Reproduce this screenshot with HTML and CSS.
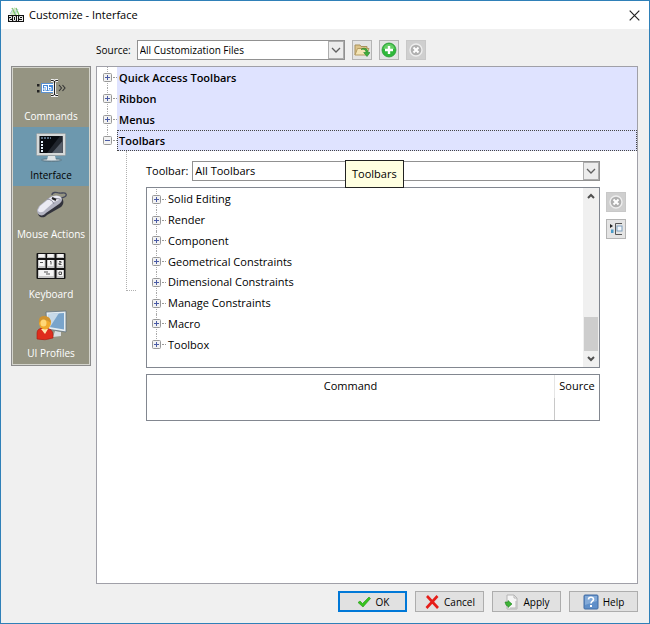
FILE: index.html
```html
<!DOCTYPE html>
<html lang="en">
<head>
<meta charset="utf-8">
<title>Customize - Interface</title>
<link rel="stylesheet" href="styles.css">
</head>
<body>
<svg class="defs" aria-hidden="true">
  <symbol id="plus" viewBox="0 0 9 9"><rect x=".5" y=".5" width="8" height="8" rx="1" fill="#f2f2f2" stroke="#999"/><path d="M2 4.500h5M4.500 2v5" stroke="#4a5ba5"/></symbol>
  <symbol id="minus" viewBox="0 0 9 9"><rect x=".5" y=".5" width="8" height="8" rx="1" fill="#f2f2f2" stroke="#999"/><path d="M2 4.500h5" stroke="#4a5ba5"/></symbol>
  <symbol id="chevron" viewBox="0 0 10 10"><path d="M1 3l4 4 4-4" fill="none" stroke="#606060" stroke-width="1.300"/></symbol>
  <symbol id="remove" viewBox="0 0 16 16"><circle cx="8" cy="8" r="6" fill="#b0b0b0" stroke="#eee" stroke-width="1.400"/><path d="M5.500 5.500l5 5M10.500 5.500l-5 5" stroke="#fff" stroke-width="2"/></symbol>
</svg>
<div class="window">
  <header class="titlebar">
    <svg class="logo" width="16" height="16" viewBox="0 0 16 16"><path d="M2.500 8L4 3l3-3 2 8z" fill="#cfe6c4"/><path d="M4 1l3.500 7M8 1l3 7" stroke="#7cc46a" stroke-width="1.300"/><path d="M2 7l3-5M7 7l3-5" stroke="#a8c9d2"/><rect y="8" width="16" height="7" fill="#111"/><path d="M1 9.500h2.500v2h-2v2h2.500M5.500 9.500h2v4h-2zM9.500 9v5M14.500 13.500v-4h-3v2h3M11 13.500h4" fill="none" stroke="#eee"/></svg>
    <h1>Customize - Interface</h1>
    <button class="close" aria-label="Close"><svg width="11" height="11" viewBox="0 0 11 11"><path d="M.7.7l9.600 9.600M10.300.7L.7 10.300" stroke="#222" stroke-width="1.200"/></svg></button>
  </header>
  <div class="source-row">
    <label for="source">Source:</label>
    <div class="combo source-combo">
      <select id="source"><option>All Customization Files</option></select>
      <span class="arrow"><svg width="10" height="10"><use href="#chevron"/></svg></span>
    </div>
    <button class="tool" aria-label="Load file"><svg width="16" height="16" viewBox="0 0 16 16"><path d="M1 13V3h5l1 1.500h6V7" fill="#dcc38a" stroke="#a9925c"/><path d="M1 13L3.500 6.500H15L12.500 13z" fill="#f4e5b5" stroke="#b59c62"/><path d="M7 7.500c3-1 5 .5 5 3h-2.300l3.300 4 3-4h-2c0-4-4-5.500-7-3z" fill="#3fae3b" stroke="#248526" stroke-width=".6"/></svg></button>
    <button class="tool" aria-label="Add"><svg width="16" height="16" viewBox="0 0 16 16"><circle cx="8" cy="8" r="7" fill="#2fb83a" stroke="#2a9a35" stroke-width=".8"/><path d="M2.500 7a5.500 5 0 0 1 11 0z" fill="#65cf65"/><path d="M8 4v8M4 8h8" stroke="#fff" stroke-width="2.400"/></svg></button>
    <button class="tool disabled" aria-label="Unload" disabled><svg width="16" height="16"><use href="#remove"/></svg></button>
  </div>
  <div class="content">
    <nav class="sidebar" aria-label="Sections">
      <button class="section">
        <svg width="32" height="32" viewBox="0 0 32 32"><path d="M2 12h2.500v2.500H2zM2 18h2.500v2.500H2z" fill="#222"/><rect x="6.500" y="11.500" width="13" height="9" fill="#fff" stroke="#5b91d0"/><rect x="8" y="13" width="10" height="6" fill="#4488d8"/><path d="M9 14.500h2.500V18H9v-2h2M13.500 13v5H16v-2.500h-2.500" fill="none" stroke="#fff"/><path d="M16 8.500h2l1.500 1 1.500-1h2M19.500 9v14M16 23.500h2l1.500-1 1.500 1h2" fill="none" stroke="#eee" stroke-width="3"/><path d="M16 8.500h2l1.500 1 1.500-1h2M19.500 9v14M16 23.500h2l1.500-1 1.500 1h2" fill="none" stroke="#222"/><path d="M24 13l2.500 3-2.500 3M27.500 13l2.500 3-2.500 3" fill="none" stroke="#333" stroke-width="1.100"/></svg>
        <span>Commands</span>
      </button>
      <button class="section current" aria-current="page">
        <svg width="32" height="32" viewBox="0 0 32 32"><ellipse cx="16.500" cy="29" rx="10" ry="1.500" fill="#a9b9c2" stroke="#47626f" stroke-width=".6"/><path d="M13 25h7l1 4h-9z" fill="#dfe4e6"/><rect x="1.500" y="2.500" width="29" height="22" rx="1" fill="#d5d9d9" stroke="#98a3a8"/><rect x="4.500" y="5" width="23" height="17" fill="#080b10"/><path d="M12 22L25 5h2.500v17z" fill="#20252d"/><path d="M17 22L27.500 10v12z" fill="#555d68"/><path d="M6 7h10" stroke="#a8cdef" stroke-dasharray="2 1"/><path d="M7 10v11" stroke="#e5f1fb" stroke-width="2" stroke-dasharray="2 1"/></svg>
        <span>Interface</span>
      </button>
      <button class="section">
        <svg width="32" height="32" viewBox="0 0 32 32"><path d="M17 5c0-3 4-3 7-2 3 .5 6-1 7 1s-2 4-6 4" fill="none" stroke="#44485a" stroke-width="1.300"/><path d="M3 21c-1 7 6 8 9 4L26 17c3-3 3-6 1-9L17 18z" fill="#32333c"/><path d="M2 20c0 6 6 7 9 3L24 14c3-2 4-5 2-7s-7-2-11 0L4 16z" fill="#b3b4c2"/><path d="M3 20c0 3 5 3 7 0l9-8c2-1 6-2 7-4-2-3-7-3-11 0L5 16z" fill="#ebebf3"/><path d="M12 9c3 0 6 2 7 5M17 8l8 1" fill="none" stroke="#8b8d9d"/><path d="M17 8l4 2" stroke="#222" stroke-width="2"/></svg>
        <span>Mouse Actions</span>
      </button>
      <button class="section">
        <svg width="32" height="32" viewBox="0 0 32 32"><rect x="1.500" y="3" width="29" height="26" rx="1" fill="#151515"/><path d="M3 4h7.500v4H3zM12 4h7.500v4H12zM21.500 4H29v4h-7.500zM3 10h7.500v8H3zM12 10h7.500v8H12zM21.500 10H29v8h-7.500zM3 20h16.500v8H3zM21.500 20H29v8h-7.500z" fill="#c6c6c6"/><path d="M4 4h5.500v3H4zM13 4h5.500v3H13zM22.500 4H28v3h-5.500zM4 10h5.500v6H4zM13 10h5.500v6H13zM22.500 10H28v6h-5.500zM4 20h14.500v6H4zM22.500 20H28v6h-5.500z" fill="#f5f5f5"/><path d="M5 12.500h3M15 11.500h1v3M24 11.500h2v1.500h-2v1.500h2.500M9 22h4M11 24h4M24 22h2.500v2.500H24z" fill="none" stroke="#555"/></svg>
        <span>Keyboard</span>
      </button>
      <button class="section">
        <svg width="32" height="32" viewBox="0 0 32 32"><path d="M20 22l6 1v4l-8 1z" fill="#d8dde0"/><path d="M11 3l20-1v21l-19-3z" fill="#e5edf2" stroke="#61727f" stroke-width=".8"/><path d="M13 5l16-1v16.500L14 18z" fill="#79a4cb"/><path d="M13 5l11-1-9 14h-1z" fill="#c7d9e8"/><path d="M2 30v-6q0-5 7-5 9 0 9 7v3q-8 3-16 1z" fill="#df2d1d" stroke="#a8180f" stroke-width=".6"/><path d="M6 20l4 5 3-5z" fill="#ffe8b0"/><ellipse cx="10" cy="14" rx="6" ry="6.500" fill="#f0a92c"/><path d="M4 14q-1-7 5-7 7 0 7 7-3-3-7-3-3 0-5 3z" fill="#cf9330"/><ellipse cx="8.500" cy="14" rx="3" ry="3.500" fill="#ffd777"/></svg>
        <span>UI Profiles</span>
      </button>
    </nav>
    <main class="panel">
      <ul class="tree">
        <li class="node"><button class="expander" aria-label="Expand Quick Access Toolbars"><svg width="9" height="9"><use href="#plus"/></svg></button><span class="node-label">Quick Access Toolbars</span></li>
        <li class="node"><button class="expander" aria-label="Expand Ribbon"><svg width="9" height="9"><use href="#plus"/></svg></button><span class="node-label">Ribbon</span></li>
        <li class="node"><button class="expander" aria-label="Expand Menus"><svg width="9" height="9"><use href="#plus"/></svg></button><span class="node-label">Menus</span></li>
        <li class="node selected"><button class="expander" aria-label="Collapse Toolbars"><svg width="9" height="9"><use href="#minus"/></svg></button><span class="node-label">Toolbars</span><span class="tooltip" role="tooltip">Toolbars</span></li>
      </ul>
      <div class="branch">
        <div class="branch-line"></div>
        <div class="editor">
          <div class="toolbar-row">
            <label for="toolbar">Toolbar:</label>
            <div class="combo">
              <select id="toolbar"><option>All Toolbars</option></select>
              <span class="arrow"><svg width="10" height="10"><use href="#chevron"/></svg></span>
            </div>
          </div>
          <div class="listbox">
            <ul class="items">
              <li><button class="expander" aria-label="Expand Solid Editing"><svg width="9" height="9"><use href="#plus"/></svg></button><span>Solid Editing</span></li>
              <li><button class="expander" aria-label="Expand Render"><svg width="9" height="9"><use href="#plus"/></svg></button><span>Render</span></li>
              <li><button class="expander" aria-label="Expand Component"><svg width="9" height="9"><use href="#plus"/></svg></button><span>Component</span></li>
              <li><button class="expander" aria-label="Expand Geometrical Constraints"><svg width="9" height="9"><use href="#plus"/></svg></button><span>Geometrical Constraints</span></li>
              <li><button class="expander" aria-label="Expand Dimensional Constraints"><svg width="9" height="9"><use href="#plus"/></svg></button><span>Dimensional Constraints</span></li>
              <li><button class="expander" aria-label="Expand Manage Constraints"><svg width="9" height="9"><use href="#plus"/></svg></button><span>Manage Constraints</span></li>
              <li><button class="expander" aria-label="Expand Macro"><svg width="9" height="9"><use href="#plus"/></svg></button><span>Macro</span></li>
              <li><button class="expander" aria-label="Expand Toolbox"><svg width="9" height="9"><use href="#plus"/></svg></button><span>Toolbox</span></li>
            </ul>
            <div class="scrollbar">
              <svg width="14" height="16" viewBox="0 0 14 16"><path d="M4 10l3-3 3 3" fill="none" stroke="#505050" stroke-width="2"/></svg>
              <div class="thumb"></div>
              <svg width="14" height="16" viewBox="0 0 14 16"><path d="M4 6l3 3 3-3" fill="none" stroke="#505050" stroke-width="2"/></svg>
            </div>
          </div>
          <table class="commands">
            <thead><tr><th>Command</th><th class="source-col">Source</th></tr></thead>
            <tbody><tr><td></td><td></td></tr></tbody>
          </table>
        </div>
        <div class="side-tools">
          <button class="tool disabled" aria-label="Delete" disabled><svg width="16" height="16"><use href="#remove"/></svg></button>
          <button class="tool" aria-label="Insert"><svg width="16" height="16" viewBox="0 0 16 16"><path d="M2 3l3 2-3 2z" fill="#222"/><path d="M3 8.500h2.500V12H3z" fill="#4b9bc9"/><path d="M14 2.500H7.500v11H14" fill="none" stroke="#555"/><rect x="9" y="5" width="5" height="5" fill="#f4f8fc" stroke="#7d9dbb"/></svg></button>
        </div>
      </div>
    </main>
  </div>
  <footer class="actions">
    <button class="action primary"><svg width="16" height="16" viewBox="0 0 16 16"><path d="M2 8.500l2-1.500 2.500 2.500L13 3l1.500 1.500L7 13z" fill="#36c51c" stroke="#219412" stroke-width=".6"/></svg>OK</button>
    <button class="action"><svg width="16" height="16" viewBox="0 0 16 16"><path d="M3 2l11 12M13.500 2L2.500 14" stroke="#e61e19" stroke-width="2.600"/></svg>Cancel</button>
    <button class="action"><svg width="16" height="16" viewBox="0 0 16 16"><path d="M4 1h7l3 3v11H4z" fill="#f5f5f5" stroke="#b5b5b5"/><path d="M11 1v3h3M13 7v7H7" fill="none" stroke="#b6b6b6"/><path d="M2 8h3V6.500L9 10l-4 3.500V12c-2 0-2-1-3-4z" fill="#3eb436" stroke="#218523" stroke-width=".6"/></svg>Apply</button>
    <button class="action"><svg width="16" height="16" viewBox="0 0 16 16"><rect x="1" y="1" width="14" height="14" rx="1" fill="#5f8fc9" stroke="#426da4"/><path d="M2 2h12v5L2 11z" fill="#83aad8"/><path d="M5.500 5.500c0-3 5-3 5 0 0 1.800-2.500 1.600-2.500 4" fill="none" stroke="#fff" stroke-width="1.600"/><rect x="7" y="11" width="2" height="2" fill="#fff"/></svg>Help</button>
  </footer>
</div>
</body>
</html>
```

FILE: styles.css
```css
* { box-sizing: border-box; }

body {
  margin: 0;
  font: 11px/16px "Open Sans", "Noto Sans", sans-serif;
  color: #000;
}

button, select { font: inherit; color: inherit; }
button { padding: 0; margin: 0; border: 0; background: none; }
ul { list-style: none; margin: 0; padding: 0; }
svg { display: block; flex: none; }
.defs { position: absolute; width: 0; height: 0; }

.window {
  display: flex;
  flex-direction: column;
  min-height: 100vh;
  border: 1px solid #2f80b8;
  background: #f0f0f0;
}

.titlebar {
  display: flex;
  align-items: center;
  gap: 5px;
  height: 28px;
  padding: 0 8px 0 7px;
  background: #fff;
}
.titlebar h1 { flex: 1; margin: 0; font-size: 11px; font-weight: 400; }
.close { padding: 1px; }

.source-row,
.sidebar,
.actions { font-size: 10px; }

.source-row {
  display: flex;
  align-items: center;
  gap: 6px;
  padding: 11px 10px 0 95px;
}

.combo { display: grid; flex: 1; height: 20px; border: 1px solid #919191; background: #fff; }
.combo select, .combo .arrow { grid-area: 1 / 1; }
.combo select {
  appearance: none;
  width: 100%;
  padding: 0 20px 0 2px;
  border: 0;
  background: none;
}
.arrow {
  display: grid;
  place-items: center;
  justify-self: end;
  width: 16px;
  border: 1px solid #adadad;
  background: #ececec;
  pointer-events: none;
}
.source-combo { flex: 0 1 208px; }

.tool {
  display: grid;
  place-items: center;
  width: 20px;
  height: 20px;
  border: 1px solid #b4b4b4;
  background: #e4e4e4;
}
.tool.disabled { background: #cfcfcf; border-color: #c8c8c8; }
.source-row .tool { margin-left: 1px; }

.content {
  display: flex;
  flex: 1;
  gap: 5px;
  padding: 6px 11px 7px 10px;
  align-items: flex-start;
}

.sidebar {
  display: grid;
  grid-template-rows: repeat(5, 1fr);
  flex: none;
  width: 80px;
  height: 300px;
  border: 1px solid #8c8c8c;
  background: #959482;
  box-shadow: inset 0 0 0 1px #d4d4cc;
  padding: 1px;
}
.section {
  display: flex;
  flex-direction: column;
  align-items: center;
  gap: 4px;
  padding-top: 4px;
  color: #fff;
  white-space: nowrap;
}
.section.current { background: #6d98ae; color: #000; }

.panel {
  flex: 1;
  align-self: stretch;
  min-width: 0;
  border: 1px solid #a0a0a8;
  background: #fff;
}

.node {
  position: relative;
  display: flex;
  align-items: center;
  gap: 5px;
  height: 21px;
  padding-left: 6px;
  background: linear-gradient(#fff, #fff) left / 20px 100% no-repeat #dfe3ff;
  font-weight: 600;
}
.node::before {
  content: "";
  position: absolute;
  left: 10px;
  top: 0;
  bottom: 0;
  border-left: 1px dotted #aaa;
}
.node.selected::before { bottom: 50%; }
.expander { position: relative; }
.expander::after {
  content: "";
  position: absolute;
  left: 10px;
  top: 4px;
  width: 4px;
  border-top: 1px dotted #999;
}
.node-label { flex: 1; padding-left: 1px; line-height: 19px; border: 1px solid transparent; }
.selected .node-label { border: 1px dotted #444; }
.tooltip {
  position: absolute;
  left: 248px;
  top: 30px;
  z-index: 1;
  padding: 5px 6px;
  border: 1px solid #222;
  background: #ffffe1;
  font-weight: 400;
}

.branch { display: flex; padding: 10px 11px 0 29px; }
.branch-line {
  flex: none;
  width: 10px;
  height: 140px;
  margin: -10px 10px 0 0;
  border: 1px dotted #b0b0b0;
  border-width: 0 0 1px 1px;
}
.editor { flex: 1; min-width: 0; }
.toolbar-row { display: flex; align-items: center; gap: 4px; }

.listbox {
  display: flex;
  height: 181px;
  margin-top: 6px;
  border: 1px solid #828790;
}
.items {
  display: grid;
  grid-template-rows: repeat(8, 1fr);
  flex: 1;
  height: 167px;
  padding: 1px 0 0 5px;
}
.items li { position: relative; display: flex; align-items: center; gap: 7px; }
.items li::before {
  content: "";
  position: absolute;
  left: 4px;
  top: 0;
  bottom: 0;
  border-left: 1px dotted #aaa;
}
.items li:last-child::before { bottom: 50%; }

.scrollbar {
  display: flex;
  flex-direction: column;
  justify-content: space-between;
  width: 16px;
  padding: 0 1px;
  background: #f0f0f0;
}
.thumb { height: 34px; margin-top: auto; background: #cdcdcd; }

.commands {
  width: 100%;
  margin-top: 6px;
  table-layout: fixed;
  border: 1px solid #828790;
  border-spacing: 0;
}
.commands th { height: 23px; padding: 0 0 2px; font-weight: 400; }
.commands td { height: 22px; padding: 0; }
.commands .source-col { width: 45px; }
.commands th + th { border-left: 1px solid #e5e5e5; }
.commands td + td { border-left: 1px solid #c8c8c8; }

.side-tools {
  display: flex;
  flex-direction: column;
  gap: 7px;
  padding: 31px 0 0 6px;
}

.actions {
  display: flex;
  justify-content: flex-end;
  gap: 8px;
  padding: 0 11px 11px;
}
.action {
  display: flex;
  align-items: center;
  justify-content: center;
  gap: 4px;
  width: 69px;
  height: 21px;
  border: 1px solid #adadad;
  background: #e1e1e1;
}
.action.primary { border: 2px solid #0078d7; }
```
